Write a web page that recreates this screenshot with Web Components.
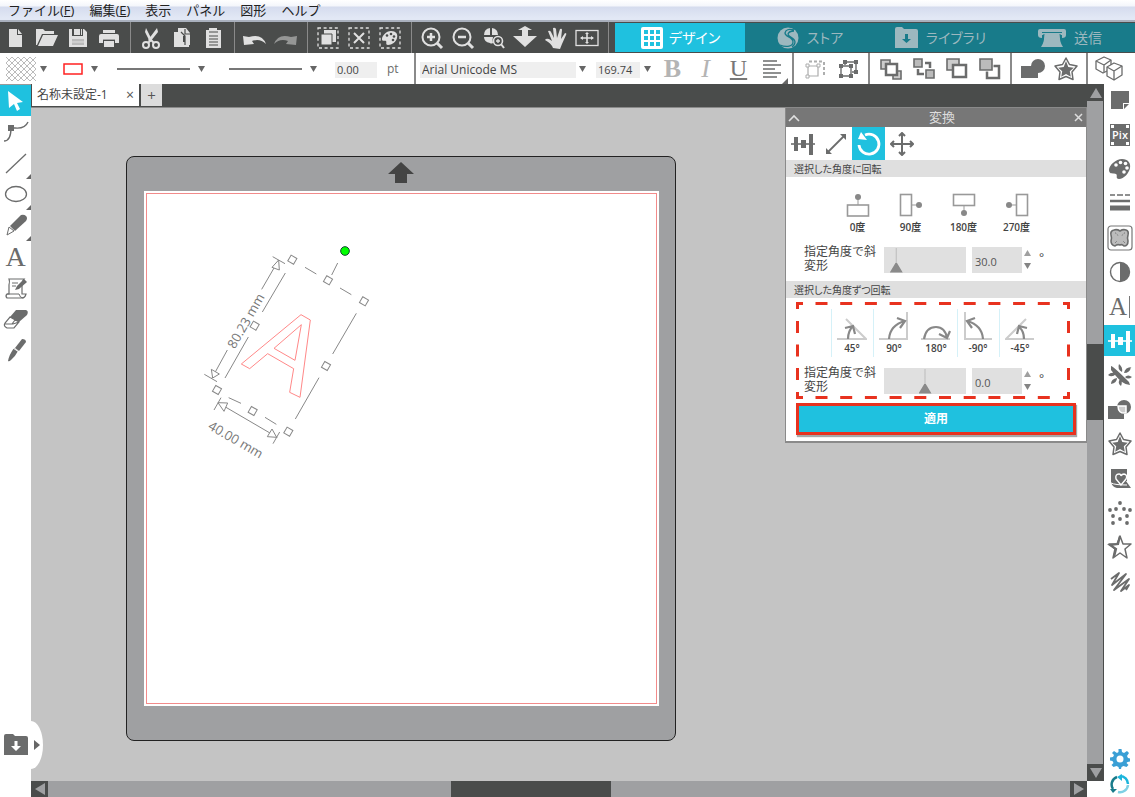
<!DOCTYPE html>
<html lang="ja">
<head>
<meta charset="utf-8">
<title>名称未設定-1</title>
<style>
html, body { margin: 0; height: 100%; }
body {
  --cyan: #1fc1df; --teal: #187b8a; --dark: #4a4c4b; --mid: #9fa0a2; --ink: #444; --icon: #6b6c6c;
  font-family: "Open Sans", "Noto Sans CJK JP", sans-serif;
  font-size: 12px; color: var(--ink); overflow: hidden;
}
</style>
</head>
<body>
<design-app></design-app>
<script>
const ICONS = {
  file: [24, 24, '<path d="M5 3h8v6h5v12H5zM14 3l4 5h-4z" fill="currentColor"/>'],
  open: [24, 24, '<path d="M1 19V3h7l2 2h9v3H7L2 19zM8 9h15l-5 11H3z" fill="currentColor"/>'],
  save: [24, 24, '<path d="M3 3h3v7h11V3h1l3 3v15H3zM8 3h6v6H8zM15 3h1v6h-1z" fill="currentColor"/><path d="M6 13h12v6H6z" fill="#bbb"/><path d="M6 16h12" stroke="#e0e0e0"/>'],
  print: [24, 24, '<path d="M6 4h12v3H6zM4 8h16q2 0 2 2v7h-4v-3H6v3H2v-7q0-2 2-2zM7 15h10v6H7z" fill="currentColor"/><path d="M6 14h12" stroke="#4a4c4b" stroke-width=".800"/>'],
  cut: [24, 24, '<path d="M7 2l6 12-2 2L6 6zM18 2l1 4-8 10-2-2z" fill="currentColor"/><g fill="none" stroke="currentColor" stroke-width="2"><circle cx="7" cy="19" r="3"/><circle cx="17" cy="19" r="3"/><path d="M9 17l3-3 3 3"/></g>'],
  copy: [24, 24, '<path d="M4 6h9v10h6v5H4z" fill="currentColor"/><path d="M8 2h8l4 5v12h-5V10h-3V6H8z" fill="currentColor"/><path d="M15 3v5h5M11 6l4 4v9" fill="none" stroke="#4a4c4b" stroke-width="1.200"/>'],
  paste: [24, 24, '<path d="M5 4h3V2h8v2h4v18H5z" fill="currentColor"/><path d="M8 6h9M8 10h9M8 13h9M8 16h9M8 19h9" stroke="#4a4c4b" stroke-width="1.200"/>'],
  undo: [24, 24, '<path d="M0 10l1 9 10-1-2-3q8-3 14 3Q19 7 6 11z" fill="currentColor"/>'],
  redo: [24, 24, '<path d="M23 10l-1 9-10-1 2-3q-8-3-14 3Q4 7 17 11z" fill="currentColor" opacity=".5"/>'],
  selectAll: [24, 24, '<rect x="2" y="2" width="20" height="20" fill="none" stroke="currentColor" stroke-dasharray="3 2.600" stroke-width="1.300"/><path d="M8 4h12v12H8z" fill="currentColor"/><path d="M5 8h11v11H5z" fill="currentColor" stroke="#4a4c4b"/>'],
  deselect: [24, 24, '<rect x="2" y="2" width="20" height="20" fill="none" stroke="currentColor" stroke-dasharray="3 2.600" stroke-width="1.300"/><path d="M7 7l10 10M17 7L7 17" stroke="currentColor" stroke-width="2"/>'],
  selectColor: [24, 24, '<rect x="2" y="2" width="20" height="20" fill="none" stroke="currentColor" stroke-dasharray="3 2.600" stroke-width="1.300"/><path d="M13 5c5 0 7 3 6 7s-5 7-9 7c-3 0-1-3-2-4s-4 1-4-2 4-8 9-8z" fill="currentColor"/><g fill="#4a4c4b"><circle cx="9" cy="9.500" r="1.300"/><circle cx="13" cy="8" r="1.300"/><circle cx="16" cy="10.500" r="1.300"/><circle cx="15" cy="14" r="1.300"/></g>'],
  zoomIn: [24, 24, '<circle cx="11" cy="11" r="8.500" fill="none" stroke="currentColor" stroke-width="2"/><path d="M17 17l5 5" stroke="currentColor" stroke-width="3"/><path d="M7 11h8M11 7v8" stroke="currentColor" stroke-width="2.500"/>'],
  zoomOut: [24, 24, '<circle cx="11" cy="11" r="8.500" fill="none" stroke="currentColor" stroke-width="2"/><path d="M17 17l5 5" stroke="currentColor" stroke-width="3"/><path d="M7 11h8" stroke="currentColor" stroke-width="2.500"/>'],
  zoomDrag: [24, 24, '<path d="M8 2v7H2q0-6 6-7zM10 2q6 1 6 7h-6zM2 11h9q-1 3 0 6-2 1-3 0-6-1-6-6z" fill="currentColor"/><circle cx="16" cy="15" r="4.500" fill="none" stroke="currentColor" stroke-width="1.600"/><path d="M19 18l3 4" stroke="currentColor" stroke-width="2"/><path d="M14 15h4M16 13v4" stroke="currentColor" stroke-width="1.300"/>'],
  fit: [24, 24, '<path d="M12 0l7 4h-4v6h9L12 21 0 10h9V4H5z" fill="currentColor"/>'],
  hand: [24, 24, '<path d="M9 22q-2-5-8-8 1-2 4-1l3 2L4 5q2-1 3 1l3 6L9 2q2-1 3 1l1 9 3-9q2-1 2 1l-1 9 4-6q2 0 1 2l-4 9-2 5z" fill="currentColor"/>'],
  pan: [24, 24, '<rect x="1" y="4.500" width="22" height="15" fill="none" stroke="currentColor" stroke-width="1.300"/><path d="M6 12h12M12 7v10" stroke="currentColor" stroke-width="1.600"/><path d="M5 12l3-2v4zM19 12l-3-2v4zM12 6l-2 2h4zM12 18l-2-2h4z" fill="currentColor"/>'],
  grid: [24, 24, '<rect x="1" y="1" width="22" height="22" rx="2" fill="currentColor"/><path d="M4 4h4v4H4zM10 4h4v4h-4zM16 4h4v4h-4zM4 10h4v4H4zM10 10h4v4h-4zM16 10h4v4h-4zM4 16h4v4H4zM10 16h4v4h-4zM16 16h4v4h-4z" fill="#1fc1df"/>'],
  store: [22, 24, '<circle cx="11" cy="12" r="10.500" fill="currentColor"/><path d="M17 4q-8-2-9 3c0 4 8 4 8 9 0 4-6 6-13 3M17 5q-5 0-6 3c0 3 7 4 7 8q0 3-3 5" fill="none" stroke="#187b8a" stroke-width="1.300"/>'],
  library: [24, 24, '<path d="M1 22V3q0-2 2-2h5l2 2h12q2 0 2 2v17z" fill="currentColor"/><path d="M11 8h3v5h3l-4.500 4L8 13h3z" fill="#187b8a"/>'],
  send: [28, 24, '<path d="M2 3h24q2 0 2 2v4q0 3-4 3V9H4v3q-4 0-4-3V5q0-2 2-2z" fill="currentColor"/><path d="M6 8h16q-1 7 3 13H3q4-6 3-13z" fill="currentColor"/><path d="M4 6.500h20M6 8l-1 6M22 8l1 6" stroke="#187b8a"/>'],
  hatch: [30, 24, '<path d="M0 0l24 24M6 0l24 24M12 0l18 18M18 0l12 12M24 0l6 6M0 6l18 18M0 12l12 12M0 18l6 6M30 0L6 24M24 0L0 24M18 0L0 18M12 0L0 12M6 0L0 6M30 6L12 24M30 12L18 24M30 18l-6 6" stroke="#aaa" stroke-width=".800"/>'],
  redBox: [20, 12, '<rect x="1" y="1" width="18" height="10" fill="#fff" stroke="#f22" stroke-width="1.500"/>'],
  line: [73, 4, '<path d="M0 2h73" stroke="#777" stroke-width="2"/>'],
  down: [8, 8, '<path d="M0 1h7L3.500 7z" fill="#666"/>'],
  up: [8, 8, '<path d="M0 7h7L3.500 1z" fill="#888"/>'],
  align: [22, 22, '<path d="M2 3h14M2 7h18M2 11h12M2 15h18M2 19h14" stroke="currentColor" stroke-width="1.600"/>'],
  group: [22, 22, '<g fill="none" stroke="currentColor" opacity=".55"><path d="M4 8h10v10H4z" stroke-width="1.200"/><path d="M5 3.500h15M20 4v15" stroke-width="2" stroke-dasharray="3 2"/><path d="M2 6h3v3H2zM13 6h3v3h-3zM2 17h3v3H2z" fill="#fff"/></g>'],
  ungroup: [22, 22, '<path d="M4 8h10v10H4zM8 7V4h11v10h-4" fill="none" stroke="currentColor" stroke-width="1.400"/><path d="M2 6h4v4H2zM12 6h4v4h-4zM2 16h4v4H2zM12 16h4v4h-4zM6 2h4v4H6zM17 2h4v4h-4zM17 12h4v4h-4z" fill="currentColor"/>'],
  front: [24, 24, '<g stroke="currentColor" stroke-width="1.600"><path d="M2 3h9v9H2z" fill="#ccc"/><path d="M14 14h8v8h-8z" fill="#ccc"/><path d="M7 7h11v11H7z" fill="#fff" stroke-width="2.500"/></g>'],
  back: [24, 24, '<g stroke="currentColor" stroke-width="1.600"><path d="M6 12v5h6M13 6h5v5" fill="none" stroke-width="2.500"/><path d="M2 2h8v8H2zM14 13h8v8h-8z" fill="#bbb"/></g>'],
  forward: [24, 24, '<g stroke="currentColor" stroke-width="1.600"><path d="M2 2h12v11H2z" fill="#ccc"/><path d="M8 8h13v12H8z" fill="#fff" stroke-width="2.500"/></g>'],
  backward: [24, 24, '<g stroke="currentColor" stroke-width="1.600"><path d="M9 9h12v12H9z" fill="#fff" stroke-width="2.500"/><path d="M2 2h12v11H2z" fill="#bbb" stroke="#fff" stroke-width="3"/><path d="M2 2h12v11H2z" fill="#bbb"/></g>'],
  weld: [26, 24, '<circle cx="18" cy="9" r="7" fill="currentColor"/><path d="M1 9h12l5 3v9H1z" fill="currentColor"/>'],
  offset: [26, 26, '<path d="M13 2l3.500 6.500 7.500 1.500-5 6 1 7.500-7-3-7 3 1-7.500-5-6 7.500-1.500z" fill="#fff" stroke="currentColor" stroke-width="1.500" stroke-linejoin="round"/><path d="M13 5l2.300 6 5.500.700-4 3.600 1 5.500-4.800-2.800-4.800 2.800 1-5.500-4-3.600 5.500-.700z" fill="currentColor"/>'],
  cubes: [28, 26, '<g fill="#fff" stroke="currentColor" stroke-width="1.300" stroke-linejoin="round"><path d="M9 1l7 3v9l-8 4-7-4V5z"/><path d="M1 5l8 4 7-5M9 9v7"/><path d="M19 7l8 3v9l-8 5-7-4v-9z"/><path d="M12 11l7 4 8-5M19 15v9"/></g>'],
  cross: [14, 18, '<path d="M2 2l10 14M12 2L2 16" stroke="currentColor" stroke-width="2"/>'],
  select: [24, 24, '<path d="M4 2l15 11-6 1 3 6-3 2-3-7-5 4z" fill="currentColor"/>'],
  node: [26, 24, '<path d="M1 21Q8 21 8 8h4q10 1 13-6" fill="none" stroke="currentColor" stroke-width="1.400"/><path d="M5 5h6v6H5z" fill="currentColor"/>'],
  segment: [24, 24, '<path d="M2 22L22 3" stroke="currentColor" stroke-width="1.300"/>'],
  ellipse: [24, 24, '<ellipse cx="12" cy="12" rx="10.500" ry="7.500" fill="none" stroke="currentColor" stroke-width="1.300"/>'],
  pencil: [24, 24, '<path d="M17 2q3-1 5 1t0 5L11 18l-5-5z" fill="currentColor"/><path d="M5 14l5 4-7 4z" fill="#fff" stroke="currentColor"/>'],
  note: [24, 24, '<path d="M5 3h15q-2 2-2 6v9h4q-1 4-4 4H3q-2-2 0-4h2V9Q6 5 5 3z" fill="#fff" stroke="currentColor" stroke-width="1.200"/><path d="M3 18h12q1 4 4 4M8 7h6M8 10h4" fill="none" stroke="currentColor"/><path d="M20 3l3 3-8 7-4 1 2-4z" fill="currentColor"/>'],
  eraser: [26, 24, '<path d="M13 3h10q3 1 1 5l-8 7-9-5z" fill="currentColor"/><path d="M7 10l9 5-5 6H4q-4-2-2-5zM2 17h8l6-2M9 17l3-4" fill="none" stroke="currentColor" stroke-width="1.200"/>'],
  knife: [24, 24, '<path d="M18 1q4 0 4 3l-7 9-4-3z" fill="currentColor"/><path d="M10 10l4 3q-3 6-7 9-2 2-3 1 1-6 6-13z" fill="currentColor"/><path d="M9 10l6 4" stroke="#fff"/>'],
  page: [24, 24, '<path d="M3 3h18v12h-6v6H3zM16 16h5l-5 5z" fill="currentColor"/>'],
  pix: [24, 24, '<path d="M2 1h20v22H2z" fill="currentColor"/><path d="M3 2h3v3H3zM18 2h3v3h-3zM3 19h3v3H3zM18 19h3v3h-3z" fill="#fff"/><text x="12" y="16" text-anchor="middle" font-size="11" font-weight="600" fill="#fff">Pix</text>'],
  palette: [24, 24, '<path d="M14 2c6 0 9 4 8 9s-6 11-11 11c-4 0-1-4-3-5s-7 1-7-4S8 2 14 2z" fill="currentColor"/><g fill="#fff"><circle cx="8" cy="8" r="1.800"/><circle cx="12.500" cy="5.500" r="1.800"/><circle cx="17.500" cy="6.500" r="1.800"/><circle cx="19" cy="11" r="1.800"/><circle cx="16" cy="15" r="1.800"/></g>'],
  stroke: [24, 24, '<path d="M2 4h5M9 4h6M17 4h5" stroke="currentColor" stroke-width="1.600"/><path d="M2 10h20" stroke="currentColor" stroke-width="2.500"/><path d="M2 17h20" stroke="currentColor" stroke-width="5"/>'],
  trace: [26, 26, '<rect x="1" y="1" width="24" height="24" rx="3" fill="#fff" stroke="#777" stroke-width="1.200"/><path d="M7 5q3-1 6 1 3-2 6-1 3 1 2 5-1 3 0 6 0 5-4 5-2-2-4-1-3-1-5 1-4-1-4-5 1-3 0-6-1-4 3-5z" fill="#bbb" stroke="currentColor" stroke-width="1.600" stroke-linejoin="round"/><path d="M8 8q2 0 3 3M18 8q-2 0-3 3M8 18l2-2M18 18l-2-2" fill="none" stroke="currentColor" stroke-dasharray="1 1"/>'],
  contrast: [24, 24, '<circle cx="12" cy="12" r="9.500" fill="#fff" stroke="currentColor" stroke-width="1.400"/><path d="M12 2.500a9.500 9.500 0 0 1 0 19z" fill="currentColor"/>'],
  transform: [26, 24, '<path d="M1 12h24" stroke="currentColor" stroke-width="1.600"/><path d="M4 5h4v14H4zM11 8h5v8h-5zM19 2h4v21h-4z" fill="currentColor"/>'],
  burst: [26, 24, '<path d="M4 3q2 0 18 16l1 3q-4 0-8-3T4 7zM12 1q4 3 3 8-5-3-3-8zM24 4q-1 6-7 6 1-6 8-6zM25 14q-4 3-7 0 3-3 7 0zM1 12q4-4 8-1-4 4-8 1zM4 21q0-5 6-6 0 5-6 6zM14 23q-4-3-1-7 3 3 1 7z" fill="currentColor"/>'],
  modify: [26, 24, '<path d="M1 8h16v13H1z" fill="currentColor"/><circle cx="17" cy="9" r="7" fill="currentColor"/><path d="M11 8h8v7q-8 1-8-7z" fill="#ccc" stroke="#fff" stroke-width="1.500"/>'],
  heart: [24, 24, '<path d="M3 2h16v12h-1l5 7H9q-5-1-6-6z" fill="currentColor"/><path d="M13 18l-5-6q-1-5 3-5 2 0 2 2 1-2 3-2 4 1 2 5z" fill="currentColor" stroke="#fff" stroke-width="1.400"/><path d="M3 16q4 2 16 2" fill="none" stroke="#fff"/>'],
  dots: [26, 24, '<g fill="currentColor"><circle cx="13" cy="2" r="1.900"/><circle cx="9" cy="8" r="1.900"/><circle cx="17" cy="8" r="1.900"/><circle cx="3" cy="9" r="1.900"/><circle cx="23" cy="9" r="1.900"/><circle cx="6" cy="15" r="1.900"/><circle cx="20" cy="15" r="1.900"/><circle cx="13" cy="18" r="1.900"/><circle cx="6" cy="22" r="1.900"/><circle cx="20" cy="22" r="1.900"/></g>'],
  star: [26, 26, '<path d="M13 2l3 8h8l-6 5 2 9-7-5-7 5 2-9-6-5h8z" fill="none" stroke="currentColor" stroke-width="1.500" stroke-linejoin="round"/><path d="M13 2l-2 8-8 1 6 4-2 8" fill="none" stroke="currentColor" stroke-width="2.200"/>'],
  scribble: [24, 24, '<path d="M3 9l8-6-7 12L18 4 6 20 21 9 13 21l8-6-3 5" fill="none" stroke="currentColor" stroke-width="1.800" stroke-linejoin="round"/>'],
  gear: [20, 20, '<path d="M8.500 0h3l.500 3 2 1 3-2 2 2-2 3 1 2 2 .500v3L17.500 13l-1 1 2 2-2 2-3-1-2 1-.500 2h-2L8.500 18l-2-1-3 1-2-2 2-2-1-2-2.500-.500v-3L3 8l1-2-2-2 2-2 3 2 1.500-1z" fill="#3a9fd5"/><circle cx="10" cy="10" r="3.500" fill="#fff"/>'],
  sync: [20, 20, '<g fill="none" stroke-width="2.500"><path d="M10 2a8 8 0 0 1 8 8" stroke="#1cb5dc"/><path d="M18 11a8 8 0 0 1-10 7" stroke="#7fd0e4"/><path d="M3 15a8 8 0 0 1 4-12" stroke="#187b8a"/></g><path d="M12 0v7L7 3z" fill="#1cb5dc"/><path d="M0 15h7l-4 4z" fill="#187b8a"/>'],
  drawer: [24, 22, '<path d="M0 21V2q0-2 2-2h7l2 2h11q2 0 2 2v17z" fill="currentColor"/><path d="M10.500 7h3v5H17l-5 5-5-5h3.500z" fill="#fff"/>'],
  next: [6, 10, '<path d="M0 0l6 5-6 5z" fill="#666"/>'],
  scale: [24, 24, '<path d="M4 20L20 4" stroke="currentColor" stroke-width="1.800"/><path d="M2 22v-6l6 6zM22 2v6l-6-6z" fill="currentColor"/>'],
  rotate: [26, 26, '<path d="M9 4A10 10 0 1 1 3 14" fill="none" stroke="currentColor" stroke-width="2.800"/><path d="M2 8l3-7 6 8z" fill="currentColor"/>'],
  move: [24, 24, '<path d="M2 12h20M12 2v20M9 4l3-3 3 3M9 20l3 3 3-3M4 9l-3 3 3 3M20 9l3 3-3 3" fill="none" stroke="currentColor" stroke-width="2"/>'],
  rot0: [24, 24, '<rect x="1.500" y="12" width="21" height="11" fill="none" stroke="#999" stroke-width="1.600"/><path d="M12 3v9" stroke="#999"/><circle cx="12" cy="4" r="3" fill="#888"/>'],
  rot90: [24, 24, '<rect x="1.500" y="1.500" width="11" height="21" fill="none" stroke="#999" stroke-width="1.600"/><path d="M12 12h9" stroke="#999"/><circle cx="20" cy="12" r="3" fill="#888"/>'],
  rot180: [24, 24, '<rect x="1.500" y="1.500" width="21" height="11" fill="none" stroke="#999" stroke-width="1.600"/><path d="M12 12v9" stroke="#999"/><circle cx="12" cy="20" r="3" fill="#888"/>'],
  rot270: [24, 24, '<rect x="11.500" y="1.500" width="11" height="21" fill="none" stroke="#999" stroke-width="1.600"/><path d="M3 12h9" stroke="#999"/><circle cx="4" cy="12" r="3" fill="#888"/>'],
  by45: [30, 30, '<path d="M0 28h29L9 8" fill="none" stroke="#ccc" stroke-width="2"/><path d="M11 28q0-8 5-13M8 17l8-2 2 8" fill="none" stroke="#888" stroke-width="2.200"/>'],
  by90: [30, 30, '<path d="M0 28h28V1" fill="none" stroke="#ccc" stroke-width="2"/><path d="M10 28Q11 14 26 10M18 7l8 3-5 7" fill="none" stroke="#888" stroke-width="2.200"/>'],
  by180: [30, 30, '<path d="M0 28h29" stroke="#ccc" stroke-width="2"/><path d="M3 28q2-12 12-12 9 0 11 11M18 23l8 4 3-7" fill="none" stroke="#888" stroke-width="2.200"/>'],
  byM90: [30, 30, '<path d="M2 1v27h27" fill="none" stroke="#ccc" stroke-width="2"/><path d="M20 28Q19 14 4 10M12 7l-8 3 5 7" fill="none" stroke="#888" stroke-width="2.200"/>'],
  byM45: [30, 30, '<path d="M29 28H1L21 8" fill="none" stroke="#ccc" stroke-width="2"/><path d="M19 28q0-8-5-12M22 17l-8-2-2 8" fill="none" stroke="#888" stroke-width="2.200"/>'],
  collapse: [12, 8, '<path d="M1 7l5-5 5 5" fill="none" stroke="#e0e0e0" stroke-width="1.600"/>'],
  close: [10, 10, '<path d="M1 1l7 7M8 1L1 8" stroke="currentColor" stroke-width="1.500"/>'],
  caretUp: [12, 10, '<path d="M0 10L6 0l6 10z" fill="#9fa0a2"/>'],
  caretDown: [12, 10, '<path d="M0 0h12L6 10z" fill="#9fa0a2"/>'],
  caretLeft: [10, 12, '<path d="M10 0v12L0 6z" fill="#9fa0a2"/>'],
  caretRight: [10, 12, '<path d="M0 0v12l10-6z" fill="#9fa0a2"/>'],
};

const RESET = `
  *, *::before { box-sizing: border-box; }
  button, input, select { font: inherit; color: inherit; border: 0; margin: 0; padding: 0; background: none; border-radius: 0; appearance: none; outline: 0; }
`;
function define(tag, css, markup) {
  customElements.define(tag, class extends HTMLElement {
    constructor() {
      super();
      const root = this.attachShadow({ mode: 'open' });
      root.innerHTML = `<style>${RESET}${css}</style>` + (typeof markup === 'function' ? markup(this) : markup);
    }
  });
}
const icon = n => `<ui-icon name="${n}"></ui-icon>`;
const tool = (n, label, cls = '') => `<button class="tool ${cls}" aria-label="${label}">${icon(n)}</button>`;

customElements.define('ui-icon', class extends HTMLElement {
  connectedCallback() {
    if (this.shadowRoot) return;
    const [w, h, body] = ICONS[this.getAttribute('name')];
    this.attachShadow({ mode: 'open' }).innerHTML =
      `<style>:host{display:block;flex:none}svg{display:block}</style><svg width="${w}" height="${h}" viewBox="0 0 ${w} ${h}" aria-hidden="true">${body}</svg>`;
  }
});

define('menu-bar', `
  :host { display: block; height: 22px; flex: none; background: linear-gradient(#fff, #f4f6fb 30%, #d5dcee 35%, #e2e8f5 90%); border-bottom: 2px solid #a9b0bd; box-sizing: border-box; }
  nav { display: flex; gap: 15px; padding-left: 8px; }
  button { font-size: 13px; line-height: 20px; color: #222; }
`, `<nav><button>ファイル(<u>F</u>)</button><button>編集(<u>E</u>)</button><button>表示</button><button>パネル</button><button>図形</button><button>ヘルプ</button></nav>`);

define('main-toolbar', `
  :host { display: flex; height: 31px; flex: none; background: var(--dark); color: #e0e0e0; }
  .group { display: flex; padding-right: 6px; margin-right: 4px; border-right: 1px solid #8a8a8a; }
  .tool { width: 31px; display: grid; place-items: center; }
  nav { flex: 1; display: flex; margin: 1px 0 1px 2px; }
  a { flex: 1 1 0; display: flex; align-items: center; justify-content: center; gap: 8px; text-decoration: none;
      background: var(--teal); color: #9db8bf; font-size: 14px; line-height: 20px; font-feature-settings: "palt"; }
  a.on { background: var(--cyan); color: #fff; gap: 5px; }
`, `
  <div class="group">${tool('file', '新規')}${tool('open', '開く')}${tool('save', '保存')}${tool('print', '印刷')}</div>
  <div class="group">${tool('cut', '切り取り')}${tool('copy', 'コピー')}${tool('paste', '貼り付け')}</div>
  <div class="group">${tool('undo', '元に戻す')}${tool('redo', 'やり直し')}</div>
  <div class="group">${tool('selectAll', 'すべて選択')}${tool('deselect', '選択解除')}${tool('selectColor', '色で選択')}</div>
  <div class="group">${tool('zoomIn', '拡大')}${tool('zoomOut', '縮小')}${tool('zoomDrag', '選択ズーム')}${tool('fit', '上下')}${tool('hand', 'パン')}${tool('pan', '全体表示')}</div>
  <nav>
    <a class="on" href="#design">${icon('grid')}<span>デザイン</span></a>
    <a href="#store">${icon('store')}<span>ストア</span></a>
    <a href="#library">${icon('library')}<span>ライブラリ</span></a>
    <a href="#send">${icon('send')}<span>送信</span></a>
  </nav>`);

define('option-bar', `
  :host { display: flex; height: 31px; flex: none; background: #fff; color: var(--icon); overflow: hidden; }
  .group { display: flex; flex: none; align-items: center; border-right: 2px solid #8a8a8a; padding: 0 4px; }
  .stroke { width: 416px; padding: 0 0 0 6px; }
  .pick { display: flex; align-items: center; gap: 8px; }
  .pick:nth-child(1) { gap: 4px; }
  .pick:nth-child(2) { margin-left: 15px; }
  .pick:nth-child(3) { margin-left: 18px; }
  .pick:nth-child(4) { margin-left: 23px; }
  input, select { height: 16px; background: #efefef; color: var(--ink); font-size: 11px; line-height: 16px; padding: 0 2px; margin-top: 3px; }
  .weight { width: 42px; margin: 3px 10px 0 17px; }
  .font { width: 156px; margin-right: 3px; font-size: 12px; }
  .size { width: 44px; margin: 3px 4px 0 9px; }
  .tool { position: relative; width: 33px; height: 31px; display: grid; place-items: center; flex: none; }
  .tool:first-of-type.type { margin-left: 4px; }
  .type { font: 26px/31px "Liberation Serif", serif; color: #777; }
  .soft { color: #b4b4b4; }
  .rule { font-size: 24px; }
  .corner::after { content: ""; position: absolute; right: 0; bottom: 0; border: solid; border-width: 0 0 6px 6px; border-color: transparent transparent #666 transparent; }
  .end { border: 0; }
  .end .tool + .tool { margin-left: 4px; }
`, `
  <div class="group stroke">
    <button class="pick" aria-label="塗り">${icon('hatch')}${icon('down')}</button>
    <button class="pick" aria-label="線の色">${icon('redBox')}${icon('down')}</button>
    <button class="pick" aria-label="線種">${icon('line')}${icon('down')}</button>
    <button class="pick" aria-label="線の太さ">${icon('line')}${icon('down')}</button>
    <input class="weight" id="weight" value="0.00"><label for="weight">pt</label>
  </div>
  <div class="group">
    <select class="font" aria-label="フォント"><option>Arial Unicode MS</option></select>${icon('down')}
    <input class="size" aria-label="サイズ" value="169.74">${icon('down')}
    <button class="tool type soft" aria-label="太字"><b>B</b></button>
    <button class="tool type soft" aria-label="斜体"><i>I</i></button>
    <button class="tool type rule" aria-label="下線"><u>U</u></button>
    ${tool('align', '揃え', 'corner')}
  </div>
  <div class="group">${tool('group', 'グループ化')}${tool('ungroup', 'グループ解除')}</div>
  <div class="group">${tool('front', '最前面')}${tool('back', '最背面')}${tool('forward', '前面')}${tool('backward', '背面')}</div>
  <div class="group">${tool('weld', '溶接')}${tool('offset', 'オフセット')}</div>
  <div class="group end">${tool('cubes', '複製')}${tool('cross', '削除')}</div>`);

define('tool-rail', `
  :host { position: relative; z-index: 2; display: flex; flex-direction: column; justify-content: space-between; width: 31px; background: #fff; color: var(--icon); border-top: 1px solid #999; }
  .tools { display: grid; grid-auto-rows: 1fr; height: 281px; }
  .tool { position: relative; display: grid; place-items: center; width: 31px; }
  .on { background: var(--cyan); color: #fff; }
  .text { font: 28px/31px "Liberation Serif", serif; }
  .more::after { content: ""; position: absolute; right: 0; bottom: 0; border: solid; border-width: 0 0 5px 5px; border-color: transparent transparent #666 transparent; }
  .drawer { display: flex; align-items: center; gap: 6px; width: 43px; height: 48px; padding-left: 4px; margin-bottom: 28px; background: #fff; border-radius: 0 12px 12px 0 / 0 24px 24px 0; }
`, `
  <div class="tools">${tool('select', '選択', 'on')}${tool('node', 'ポイント編集')}${tool('segment', '線', 'more')}${tool('ellipse', '楕円', 'more')}${tool('pencil', 'フリーハンド', 'more')}<button class="tool text" aria-label="テキスト">A</button>${tool('note', 'スケッチ')}${tool('eraser', '消しゴム')}${tool('knife', 'ナイフ')}</div>
  <button class="drawer" aria-label="ライブラリを開く">${icon('drawer')}${icon('next')}</button>`);

define('panel-rail', `
  :host { display: flex; flex-direction: column; justify-content: space-between; width: 31px; margin-top: -1px; background: #fff; color: var(--icon); }
  .tools { display: grid; grid-auto-rows: 1fr; height: 516px; }
  .tool { display: grid; place-items: center; width: 31px; height: 31px; align-self: center; }
  .on { background: var(--cyan); color: #fff; }
  .text { display: flex; align-items: center; justify-content: center; gap: 2px; font: 25px/31px "Liberation Serif", serif; }
  .text::after { content: ""; width: 1px; height: 22px; background: #777; }
  .foot { display: grid; gap: 5px; justify-items: center; padding-bottom: 3px; }
`, `
  <div class="tools">${tool('page', 'ページ設定')}${tool('pix', 'PixScan')}${tool('palette', '塗り')}${tool('stroke', '線')}${tool('trace', 'トレース')}${tool('contrast', '効果')}<button class="tool text" aria-label="テキストスタイル">A</button>${tool('transform', '変換', 'on')}${tool('burst', '複製')}${tool('modify', '修正')}${tool('offset', 'オフセット')}${tool('heart', 'マッチング')}${tool('dots', 'ラインストーン')}${tool('star', 'スケッチ')}${tool('scribble', 'ハッチング')}</div>
  <div class="foot"><button aria-label="設定">${icon('gear')}</button><button aria-label="更新">${icon('sync')}</button></div>`);

define('document-tabs', `
  :host { display: flex; align-items: flex-end; gap: 2px; padding: 0 0 1px 1px; background: var(--dark); border-bottom: 1px solid #8a8a8a; }
  .tab { display: flex; align-items: center; justify-content: space-between; width: 107px; height: 22px; padding: 0 5px; background: #fff; line-height: 22px; }
  .add { width: 21px; height: 22px; background: #dcdcdc; font-size: 15px; line-height: 22px; color: #555; }
  .x { display: grid; place-items: center; width: 8px; height: 22px; color: #555; font-size: 14px; }
`, `<div class="tab"><span>名称未設定-1</span><button class="x" aria-label="閉じる">×</button></div><button class="add" aria-label="新しいタブ">+</button>`);

define('scroll-track', `
  :host { display: flex; background: var(--mid); }
  :host([axis="y"]) { flex-direction: column; border-right: 1px solid var(--dark); }
  button { display: grid; place-items: center; flex: none; background: var(--dark); width: 17px; height: 17px; }
  :host([axis="x"]) button { height: 16px; }
  .before { flex: 403 1 0; } .thumb { background: var(--dark); }
  :host([axis="y"]) .before { flex-grow: 24; } :host([axis="y"]) .thumb { flex: 0 0 76px; } :host([axis="y"]) .after { flex: 34 1 0; }
  :host([axis="x"]) .thumb { flex: 0 0 160px; } :host([axis="x"]) .after { flex: 459 1 0; }
`, el => {
  const y = el.getAttribute('axis') === 'y';
  return `<button aria-label="戻る">${icon(y ? 'caretUp' : 'caretLeft')}</button><span class="before"></span><span class="thumb"></span><span class="after"></span><button aria-label="進む">${icon(y ? 'caretDown' : 'caretRight')}</button>`;
});

const handle = (x, y) => `<rect x="${x - 10}" y="${y - 10}" width="20" height="20" fill="#fff" transform="rotate(30 ${x} ${y})"/>`;
define('cutting-mat', `
  :host { display: flex; flex-direction: column; align-items: center; width: 550px; padding: 5px 0 34px; background: var(--mid); border: 1px solid #222; border-radius: 8px; box-sizing: border-box; }
  .page { position: relative; width: 515px; height: 515px; margin-top: 7px; padding: 2px; background: #fff; }
  .cut { height: 100%; border: 1px solid #f28b8b; }
  .art { position: absolute; left: 46px; top: 39px; }
  .lines { fill: none; stroke: #888; stroke-width: 3; }
  text { font-size: 39px; fill: #777; text-anchor: middle; dominant-baseline: central; }
`, `
  <svg width="26" height="22" viewBox="0 0 26 22" aria-hidden="true"><path d="M13 0l13 12h-7v9H7v-9H0z" fill="#444"/></svg>
  <div class="page"><div class="cut"></div>
    <svg class="art" width="200" height="240" viewBox="0 0 600 720">
      <path d="M333 254l28 16-31 232-31-15 12-71-78-45-54 45-25-14zM334 284l-82 71 63 36z" fill="none" stroke="#f88" stroke-width="3"/>
      <g class="lines">
        <path d="M345 112l34 20M450 174l34 20M443 99l-18 36M286 129l-69 117M175 321l-70 123M499 250l-71 122M387 443l-71 124M116 503l37 17M225 562l34 21"/>
        <path d="M266 90l-51 88M112 360l-46 84M248 80l37 21M43 433l38 22M84 518l178 104M93 503l-21 37M269 606l-20 35"/>
        <path d="M266 90l-20 22 22 8zM68 444l-4-26 24 14zM84 518l29 1-11 25zM260 622l-28-2 14-23z" fill="#fff"/>
        ${handle(307, 89)}${handle(414, 151)}${handle(522, 214)}${handle(194, 287)}${handle(408, 408)}${handle(81, 480)}${handle(188, 543)}${handle(295, 605)}
      </g>
      <circle cx="465" cy="63" r="13" fill="#0f0" stroke="#143" stroke-width="3"/>
      <text x="167" y="272" transform="rotate(-60 167 272)">80.23 mm</text>
      <text x="138" y="628" transform="rotate(30 138 628)">40.00 mm</text>
    </svg>
  </div>`);

define('angle-field', `
  :host { display: grid; grid-template-columns: 74px 82px 50px 8px 1fr; column-gap: 6px; align-items: start; padding-left: 18px; height: 28px; }
  label { line-height: 14px; margin-top: 1px; }
  input { height: 26px; background: #e0e0e0; }
  input[type=range] { width: 82px; margin-top: 3px; }
  input[type=range]::-webkit-slider-thumb { appearance: none; width: 13px; height: 25px; background: linear-gradient(#bbb 15px, #8a8a8a 15px); clip-path: polygon(6px 0, 7px 0, 7px 15px, 13px 25px, 0 25px, 6px 15px); }
  .value { width: 50px; margin-top: 3px; padding: 3px 0 0 3px; color: #555; font-size: 11px; }
  .spin { display: grid; gap: 5px; padding-top: 5px; margin-left: -4px; }
  .unit { line-height: 20px; margin: 4px 0 0 -3px; }
  .spin ui-icon { opacity: .8; }
`, el => `
  <label for="v">指定角度で斜変形</label>
  <input type="range" aria-label="角度" min="${el.getAttribute('min')}" max="${el.getAttribute('max')}" value="${el.getAttribute('value')}">
  <input class="value" id="v" value="${Number(el.getAttribute('value')).toFixed(1)}">
  <span class="spin"><button aria-label="増やす">${icon('up')}</button><button aria-label="減らす">${icon('down')}</button></span>
  <span class="unit">°</span>`);

const turn = (n, t) => `<button>${icon(n)}<span>${t}</span></button>`;
define('transform-panel', `
  :host { display: block; width: 302px; background: #fff; border: solid #8a8a8a; border-width: 0 1px 2px; box-sizing: border-box; }
  header { display: flex; align-items: center; height: 19px; padding: 0 2px; background: #777; color: #ddd; }
  header span { flex: 1; text-align: center; font-size: 13px; line-height: 19px; padding-left: 10px; }
  .tabs { display: flex; height: 33px; }
  .tool { display: grid; place-items: center; width: 33px; color: var(--icon); }
  .on { background: var(--cyan); color: #fff; }
  h3 { margin: 0; height: 17px; padding-left: 8px; background: #dfdfdf; font-size: 10px; line-height: 18px; font-weight: 400; font-feature-settings: "palt"; }
  .row { display: flex; padding-left: 45px; }
  .row button { display: flex; flex-direction: column; align-items: center; font-size: 10px; line-height: 14px; font-weight: 600; }
  .to { padding-top: 16px; height: 67px; }
  .to button { width: 53px; gap: 3px; }
  .by { height: 67px; padding-top: 11px; }
  .by button { width: 42px; height: 48px; box-shadow: inset 1px 0 #d5f1f8; }
  .by button:nth-child(3) { box-shadow: none; }
  .by ui-icon { margin-top: 2px; }
  angle-field.first { height: 37px; }
  .steps { position: relative; height: 105px; }
  .mark { position: absolute; left: 10px; top: 4px; pointer-events: none; }
  .apply { display: block; width: calc(100% - 20px); height: 32px; margin: 0 0 6px 10px; border: 3px solid #e8321f; background: var(--cyan); color: #fff; font-weight: 600; line-height: 24px; box-shadow: 1px 2px 1px #a8a8a8; }
`, `
  <header><button aria-label="折りたたむ">${icon('collapse')}</button><span>変換</span><button aria-label="閉じる">${icon('close')}</button></header>
  <div class="tabs">${tool('transform', '整列')}${tool('scale', 'サイズ')}${tool('rotate', '回転', 'on')}${tool('move', '移動')}</div>
  <h3>選択した角度に回転</h3>
  <div class="row to">${turn('rot0', '0度')}${turn('rot90', '90度')}${turn('rot180', '180度')}${turn('rot270', '270度')}</div>
  <angle-field class="first" min="0" max="360" value="30"></angle-field>
  <h3>選択した角度ずつ回転</h3>
  <div class="steps">
    <div class="row by">${turn('by45', '45°')}${turn('by90', '90°')}${turn('by180', '180°')}${turn('byM90', '-90°')}${turn('byM45', '-45°')}</div>
    <angle-field min="-180" max="180" value="0"></angle-field>
    <svg class="mark" width="274" height="97" viewBox="0 0 274 97" aria-hidden="true">
      <g fill="none" stroke="#e8321f" stroke-width="3">
        <path d="M1.500 7V1.500H7M267 1.500h5.500V7M272.500 90v5.500H267M7 95.500H1.500V90"/>
        <path d="M19.500 1.500H262M19.500 95.500H262" stroke-dasharray="12 12.700"/>
        <path d="M1.500 19V80M272.500 19V80" stroke-dasharray="12 11.500"/>
      </g>
    </svg>
  </div>
  <button class="apply">適用</button>`);

define('design-workspace', `
  :host { flex: 1; min-width: 0; display: grid; grid-template: 24px minmax(0, 1fr) 16px / minmax(0, 1fr) 17px; background: #fff; }
  .canvas { position: relative; overflow: hidden; background: #c4c4c4; padding: 48px 0 0 95px; }
  scroll-track[axis="y"] { grid-area: 1 / 2 / 3 / 3; }
  document-tabs { grid-area: 1 / 1; }
  transform-panel { position: absolute; right: 0; top: 0; }
`, `
  <document-tabs></document-tabs>
  <div class="canvas"><cutting-mat></cutting-mat><transform-panel></transform-panel></div>
  <scroll-track axis="y"></scroll-track>
  <scroll-track axis="x"></scroll-track>`);

define('design-app', `
  :host { display: flex; flex-direction: column; height: 100vh; background: #fff; }
  main { flex: 1; min-height: 0; display: flex; }
`, `
  <menu-bar></menu-bar>
  <main-toolbar></main-toolbar>
  <option-bar></option-bar>
  <main><tool-rail></tool-rail><design-workspace></design-workspace><panel-rail></panel-rail></main>`);
</script>
</body>
</html>
